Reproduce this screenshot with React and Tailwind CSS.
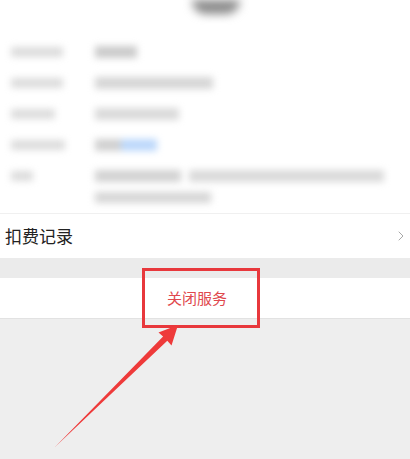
import { ChevronRight } from 'lucide-react';

const rows = [
  { label: 'w-[52px]', value: [{ w: 'w-[42px]', c: 'bg-[#cbcbcb]' }] },
  { label: 'w-[52px]', value: [{ w: 'w-[118px]', c: 'bg-[#d6d6d6]' }] },
  { label: 'w-[44px]', value: [{ w: 'w-[84px]', c: 'bg-[#dadada]' }] },
  {
    label: 'w-[54px]',
    value: [
      { w: 'w-[26px]', c: 'bg-[#d0d0d0]' },
      { w: 'w-[36px]', c: 'bg-[#bcd8fb]' }
    ]
  }
];

function Bar({ w, c, h = 'h-[10px]' }) {
  return <div className={`${w} ${h} ${c}`} />;
}

export default function App() {
  return (
    <div
      className="relative h-[459px] w-[410px] overflow-hidden bg-[#eeeeee]"
      style={{ fontFamily: '"Noto Sans CJK SC", "Noto Sans", sans-serif' }}
    >
      {/* blurred details block */}
      <div className="h-[213px] bg-white">
        <div className="flex justify-center pl-[22px]">
          <div className="h-[14px] w-[48px] rounded-b-full bg-[#8a8a8a] blur-[5px]" />
        </div>
        <div className="flex flex-col gap-[19px] pt-[32px] blur-[3.5px]">
          {rows.map((r, i) => (
            <div key={i} className="flex items-center">
              <div className="w-[95px] pl-[11px]">
                <Bar w={r.label} c="bg-[#dcdcdc]" />
              </div>
              <div className="flex">
                {r.value.map((v, j) => (
                  <Bar key={j} w={v.w} c={v.c} h="h-[12px]" />
                ))}
              </div>
            </div>
          ))}
          <div className="flex items-start">
            <div className="w-[95px] pl-[11px] pt-[1px]">
              <Bar w="w-[22px]" c="bg-[#dcdcdc]" />
            </div>
            <div className="flex flex-col gap-[10px]">
              <div className="flex gap-[8px]">
                <Bar w="w-[86px]" c="bg-[#d2d2d2]" h="h-[12px]" />
                <Bar w="w-[195px]" c="bg-[#dadada]" h="h-[12px]" />
              </div>
              <Bar w="w-[116px]" c="bg-[#d6d6d6]" h="h-[11px]" />
            </div>
          </div>
        </div>
      </div>

      <div className="flex h-[45px] items-center justify-between border-t border-[#f0f0f0] bg-white pl-[5px] pr-[1px]">
        <span className="text-[17px] text-[#222]">扣费记录</span>
        <ChevronRight className="h-[20px] w-[16px] text-[#a8a8a8]" strokeWidth={1.5} />
      </div>

      <div className="h-[20px] bg-[#ebebeb]" />

      <div className="flex h-[41px] items-center justify-center border-b border-[#e2e2e2] bg-white pr-[16px]">
        <span className="text-[15px] text-[#e0484d]">关闭服务</span>
      </div>

      {/* annotation: red box and arrow */}
      <div className="absolute left-[142px] top-[268px] h-[60px] w-[118px] border-[3px] border-[#e8383c]" />
      <svg className="absolute left-0 top-0" width="410" height="459" viewBox="0 0 410 459">
        <polygon
          points="55,447 167.3,340.7 171.5,345.5 178,325 158.5,332.5 163.1,336.5"
          fill="#ee3a3a"
        />
      </svg>
    </div>
  );
}
